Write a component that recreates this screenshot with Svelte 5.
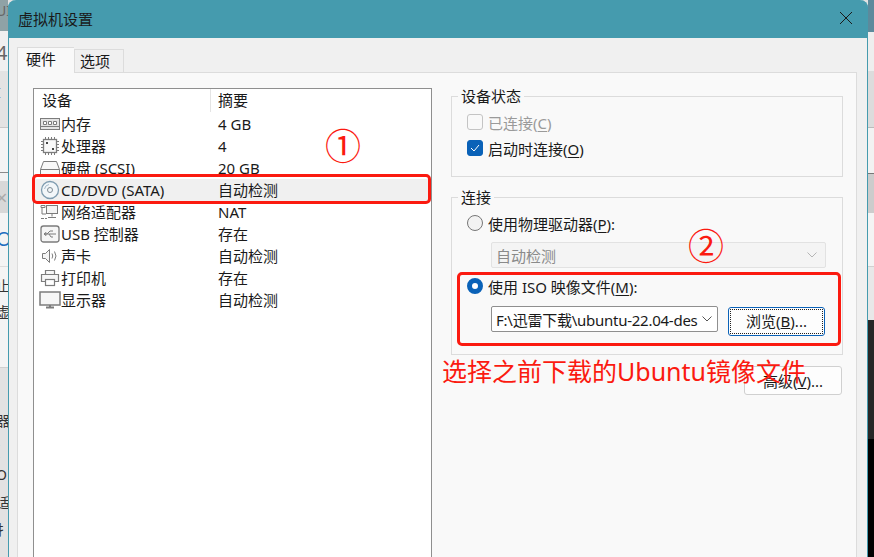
<script>
	const devices = [
		{ name: '内存', summary: '4 GB', icon: 'ram' },
		{ name: '处理器', summary: '4', icon: 'cpu' },
		{ name: '硬盘 (SCSI)', summary: '20 GB', icon: 'disk' },
		{ name: 'CD/DVD (SATA)', summary: '自动检测', icon: 'cd', selected: true },
		{ name: '网络适配器', summary: 'NAT', icon: 'net' },
		{ name: 'USB 控制器', summary: '存在', icon: 'usb' },
		{ name: '声卡', summary: '自动检测', icon: 'sound' },
		{ name: '打印机', summary: '存在', icon: 'printer' },
		{ name: '显示器', summary: '自动检测', icon: 'monitor' }
	];

	// what shows of the windows behind the dialog: [height, colour]
	const leftBands = [
		[31, '#8fa2a6'], [40, '#f0f0f0'], [56, '#e3e3e3'], [1, '#c8c8c8'], [44, '#f4f4f4'], [1, '#8a8a8a'],
		[8, '#f2f2f2'], [32, '#d8d8d8'], [53, '#f4f4f4'], [1, '#dcdcdc'], [100, '#f4f4f4'], [1, '#cfcfcf'], [189, '#e2e2e2']
	];
	const rightBands = [
		[32, '#5c8a9c'], [39, '#eeeeee'], [56, '#dcdcdc'], [1, '#bbbbbb'], [45, '#f2f2f2'], [1, '#777777'],
		[39, '#cccccc'], [53, '#f4f4f4'], [1, '#d0d0d0'], [53, '#e8e8e8'], [119, '#262626'], [118, '#000000']
	];
</script>

<div class="desktop">
	<div class="strip strip-left">
		{#each leftBands as b}
			<div style="height:{b[0]}px;background:{b[1]}"></div>
		{/each}
	</div>
	<div class="strip strip-right">
		{#each rightBands as b}
			<div style="height:{b[0]}px;background:{b[1]}"></div>
		{/each}
	</div>

	<div class="peek">
		<span style="top:3px" class="gray">UI</span>
		<span style="top:42px" class="big gray">4</span>
		<span style="top:85px">I</span>
		<span style="top:187px" class="big pale">×</span>
		<span style="top:228px" class="big blue">O</span>
		<span style="top:278px">止</span>
		<span style="top:304px">虚</span>
		<span style="top:413px">器</span>
		<span style="top:442px">(</span>
		<span style="top:467px">O</span>
		<span style="top:495px">适</span>
		<span style="top:522px">扌</span>
	</div>

	<div class="dialog">
		<header class="titlebar">
			<span>虚拟机设置</span>
			<svg width="14" height="14" viewBox="0 0 14 14"><path d="M1 1l12 12M13 1L1 13" stroke="#1a1a1a" stroke-width="1" fill="none" /></svg>
		</header>

		<div class="content">
			<div class="tabs">
				<div class="tab active">硬件</div>
				<div class="tab">选项</div>
			</div>

			<div class="panel">
				<div class="list">
					<div class="list-head">
						<div class="col-a">设备</div>
						<div class="col-b">摘要</div>
					</div>
					{#each devices as d}
						<div class="row" class:selected={d.selected}>
							<div class="col-a name">
								<svg class="icon" width="22" height="22" viewBox="0 0 22 22" fill="none" stroke="#7c7c7c">
									{#if d.icon === 'ram'}
										<rect x="1.5" y="5.5" width="19" height="11" fill="#e4e4e4" />
										<path d="M4.500 8.500h3v3h-3zM9.500 8.500h3v3h-3zM14.500 8.500h3v3h-3z" fill="#fff" />
										<path d="M1.500 13.500h19" />
									{:else if d.icon === 'cpu'}
										<rect x="4.500" y="4.500" width="13" height="13" fill="#f8f8f8" stroke-width="1.300" />
										<path d="M6.500 2v2M9.500 2v2M12.500 2v2M15.500 2v2M6.500 18v2M9.500 18v2M12.500 18v2M15.500 18v2M2 6.500h2M2 9.500h2M2 12.500h2M2 15.500h2M18 6.500h2M18 9.500h2M18 12.500h2M18 15.500h2" />
										<path d="M7 7h2v2H7zM13 13h2v2h-2z" fill="#444" stroke="none" />
									{:else if d.icon === 'disk'}
										<path d="M4.500 4.500h13l3 8v5h-19v-5z" fill="#f8f8f8" />
										<path d="M1.500 12.500h19" />
									{:else if d.icon === 'cd'}
										<circle cx="11" cy="11" r="8.500" fill="#f2f6f9" stroke="#7f9cb0" stroke-width="1.300" />
										<circle cx="11" cy="11" r="2.500" stroke="#7f8c95" />
										<path d="M5.500 10a5.500 5.500 0 0 1 4.500-4.500" stroke="#a8bccb" />
									{:else if d.icon === 'net'}
										<rect x="7.500" y="4.500" width="11" height="8" fill="#f4f4f4" />
										<path d="M13 12.500v3M9 16.500h8M2 4.500h4v2H2zM3 7v6h4M2 17.500h3M6 17.500h2" />
									{:else if d.icon === 'usb'}
										<rect x="2" y="3" width="18" height="16" rx="2.500" stroke-width="1.300" fill="#f6f6f6" />
										<path d="M5 11h12M8 11l3-3h3M10 11l2 3h2M5 11l2-1.500v3z" />
									{:else if d.icon === 'sound'}
										<path d="M3.500 8.500h3l4-4v13l-4-4h-3z" fill="#f6f6f6" />
										<path d="M13 8.500q1.500 2.500 0 5M15.500 6.500q3 4.500 0 9" />
									{:else if d.icon === 'printer'}
										<path d="M6.500 7.500v-4h9v4M6.500 14.500h-4v-7h17v7h-4" fill="#f6f6f6" stroke-width="1.200" />
										<rect x="6.500" y="12.500" width="9" height="6" fill="#fff" stroke-width="1.200" />
									{:else}
										<rect x="1" y="3" width="20" height="13" fill="#f6f6f6" stroke-width="1.500" />
										<path d="M7 18.500h8" stroke-width="2" />
										<path d="M11 16v2" stroke-width="2" />
									{/if}
								</svg>
								<span>{d.name}</span>
							</div>
							<div class="col-b">{d.summary}</div>
						</div>
					{/each}
				</div>

				<div class="side">
					<fieldset class="group status">
						<legend>设备状态</legend>
						<label class="check disabled"><i class="box"></i><span>已连接(<u>C</u>)</span></label>
						<label class="check"><i class="box on"><svg width="10" height="8" viewBox="0 0 10 8"><path d="M1 4l3 3 5-6" stroke="#fff" fill="none" /></svg></i><span>启动时连接(<u>O</u>)</span></label>
					</fieldset>

					<fieldset class="group conn">
						<legend>连接</legend>
						<label class="check"><i class="radio"></i><span>使用物理驱动器(<u>P</u>):</span></label>
						<div class="select disabled">
							<span>自动检测</span>
							<svg width="10" height="6" viewBox="0 0 10 6"><path d="M.5.5L5 5 9.500.5" stroke="#b5b5b5" fill="none" /></svg>
						</div>
						<label class="check iso"><i class="radio on"></i><span>使用 ISO 映像文件(<u>M</u>):</span></label>
						<div class="file-row">
							<div class="select path">
								<span>F:\迅雷下载\ubuntu-22.04-des</span>
								<svg width="10" height="6" viewBox="0 0 10 6"><path d="M.5.5L5 5 9.500.5" stroke="#555" fill="none" /></svg>
							</div>
							<button class="btn default"><span>浏览(<u>B</u>)...</span></button>
						</div>
					</fieldset>

					<div class="advanced">
						<button class="btn">高级(<u>V</u>)...</button>
					</div>
				</div>
			</div>
		</div>
	</div>

	<!-- screenshot annotations -->
	<div class="mark mark-1"></div>
	<div class="mark mark-2"></div>
	<div class="num num-1">①</div>
	<div class="num num-2">②</div>
	<div class="note">选择之前下载的Ubuntu镜像文件</div>
</div>

<style>
	:global(body) {
		margin: 0;
	}
	.desktop {
		position: relative;
		width: 874px;
		height: 557px;
		overflow: hidden;
		background: #e2e2e2;
		font-family: "Noto Sans", "Noto Sans CJK SC", sans-serif;
		font-size: 15px;
		color: #1a1a1a;
	}
	.strip {
		position: absolute;
		top: 0;
		width: 8px;
	}
	.strip-left {
		left: 0;
	}
	.strip-right {
		right: 0;
		width: 6px;
	}
	.peek span {
		position: absolute;
		left: -4px;
		width: 12px;
		overflow: hidden;
		white-space: nowrap;
		font-size: 14px;
		line-height: 16px;
		color: #333;
	}
	.peek .big {
		font-size: 20px;
		line-height: 22px;
	}
	.peek .gray {
		color: #666;
	}
	.peek .pale {
		color: #aaa;
	}
	.peek .blue {
		color: #1f6fc0;
	}
	.dialog {
		position: absolute;
		left: 8px;
		top: 0;
		width: 860px;
		height: 557px;
		box-sizing: border-box;
		display: flex;
		flex-direction: column;
		border-radius: 8px 8px 0 0;
		background: #f0f0f0;
		border-right: 1px solid #459bae;
		border-left: 1px solid #459bae;
	}
	.titlebar {
		height: 38px;
		flex: none;
		margin: 0 -1px;
		padding: 0 15px 2px 10px;
		box-sizing: border-box;
		display: flex;
		align-items: center;
		justify-content: space-between;
		background: #459bae;
		border-radius: 8px 8px 0 0;
	}
	.content {
		flex: 1;
		display: flex;
		flex-direction: column;
		padding: 9px 10px 0 8px;
		min-height: 0;
	}
	.tabs {
		display: flex;
		align-items: flex-end;
		height: 25px;
		flex: none;
		position: relative;
		z-index: 1;
	}
	.tab {
		width: 50px;
		height: 23px;
		box-sizing: border-box;
		border: 1px solid #dcdcdc;
		border-bottom: none;
		padding-left: 5px;
		line-height: 22px;
		background: #f0f0f0;
	}
	.tab.active {
		width: 57px;
		height: 26px;
		padding-left: 8px;
		line-height: 22px;
		background: #f9f9f9;
		margin-bottom: -1px;
		border-right: none;
	}
	.panel {
		flex: 1;
		display: flex;
		gap: 19px;
		padding: 15px 13px 0 15px;
		background: #f9f9f9;
		border: 1px solid #dcdcdc;
		border-bottom: none;
		min-height: 0;
	}
	.list {
		width: 399px;
		flex: none;
		background: #fff;
		border: 1px solid #8f8f8f;
		border-bottom: none;
		box-sizing: border-box;
	}
	.list-head {
		display: flex;
		height: 24px;
		align-items: flex-start;
	}
	.list-head .col-a {
		padding-left: 8px;
		height: 23px;
		line-height: 23px;
		border-right: 1px solid #e4e4e4;
	}
	.list-head .col-b {
		line-height: 23px;
	}
	.col-a {
		width: 177px;
		flex: none;
		box-sizing: border-box;
	}
	.col-b {
		padding-left: 7px;
		white-space: nowrap;
	}
	.row {
		display: flex;
		height: 22px;
		line-height: 22px;
		white-space: nowrap;
	}
	.row.selected {
		background: #f0f0f0;
	}
	.name {
		display: flex;
		align-items: center;
		padding-left: 5px;
	}
	.icon {
		flex: none;
	}
	.side {
		flex: 1;
		display: flex;
		flex-direction: column;
		min-width: 0;
		margin-top: -1px;
	}
	.group {
		margin: 0;
		padding: 4px 0 0 15px;
		border: 1px solid #dcdcdc;
		box-sizing: border-box;
		min-width: 0;
		flex: none;
	}
	.group legend {
		padding: 0 3px;
		margin-left: -9px;
		line-height: 18px;
	}
	.status {
		height: 90px;
		margin-bottom: 11px;
	}
	.conn {
		height: 167px;
	}
	.check {
		display: flex;
		align-items: center;
		height: 26px;
		gap: 5px;
		white-space: nowrap;
	}
	.check u {
		text-underline-offset: 2px;
	}
	.check.disabled {
		color: #9a9a9a;
	}
	.box {
		width: 16px;
		height: 16px;
		box-sizing: border-box;
		border: 1px solid #c4c4c4;
		border-radius: 3px;
		display: flex;
		align-items: center;
		justify-content: center;
	}
	.box.on {
		background: #0a62b8;
		border-color: #0a62b8;
	}
	.radio {
		width: 16px;
		height: 16px;
		box-sizing: border-box;
		border: 1px solid #777;
		border-radius: 50%;
		background: #f2f2f2;
	}
	.radio.on {
		border: 5px solid #0a62b8;
		background: #fff;
	}
	.select {
		display: flex;
		align-items: center;
		justify-content: space-between;
		box-sizing: border-box;
		height: 26px;
		margin: 6px 16px 0 24px;
		padding: 0 5px 0 4px;
		background: #f4f4f4;
		border: 1px solid #e2e2e2;
		border-radius: 2px;
	}
	.select.disabled {
		color: #8a8a8a;
		padding-right: 8px;
	}
	.iso {
		margin-top: 5px;
	}
	.file-row {
		display: flex;
		align-items: flex-start;
		gap: 10px;
		margin: 7px 16px 0 24px;
	}
	.select.path {
		margin: 0;
		width: 227px;
		flex: none;
		background: #fff;
		border-color: #8f8f8f;
		white-space: nowrap;
		letter-spacing: -0.25px;
	}
	.btn {
		font: inherit;
		color: inherit;
		box-sizing: border-box;
		width: 98px;
		height: 29px;
		padding: 0;
		background: #fdfdfd;
		border: 1px solid #d0d0d0;
		border-radius: 3px;
	}
	.btn.default {
		width: 97px;
		margin-top: 1px;
		border: 1px solid #0a62b8;
		padding: 1px;
	}
	.btn.default span {
		display: block;
		height: 100%;
		line-height: 23px;
		box-sizing: border-box;
		border: 1px dotted #222;
	}
	.advanced {
		display: flex;
		justify-content: flex-end;
		margin-top: 11px;
		padding-right: 1px;
	}
	.mark {
		position: absolute;
		box-sizing: border-box;
		border: 3px solid #fb1a10;
		border-radius: 5px;
	}
	.mark-1 {
		left: 32px;
		top: 174px;
		width: 399px;
		height: 30px;
	}
	.mark-2 {
		left: 457px;
		top: 272px;
		width: 384px;
		height: 74px;
	}
	.num {
		position: absolute;
		color: #fb1a10;
		font-size: 36px;
		line-height: 40px;
		font-family: "Noto Sans CJK SC", sans-serif;
	}
	.num-1 {
		left: 325px;
		top: 124px;
	}
	.num-2 {
		left: 688px;
		top: 224px;
	}
	.note {
		position: absolute;
		left: 442px;
		top: 354px;
		color: #fb1a10;
		font-size: 25px;
		line-height: 34px;
		white-space: nowrap;
	}
</style>
